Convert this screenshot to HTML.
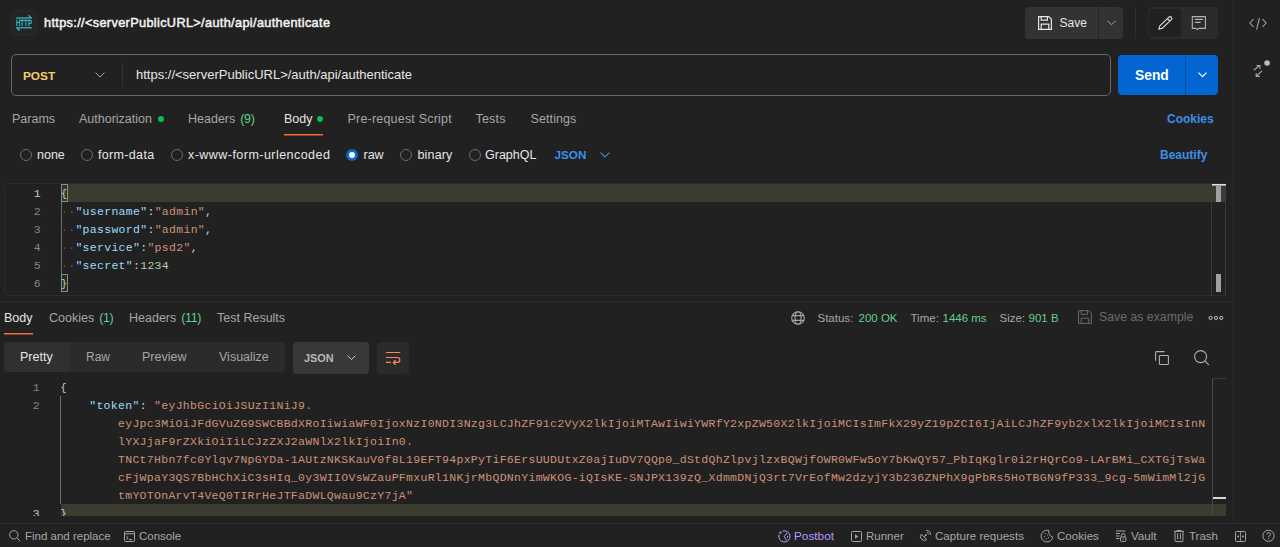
<!DOCTYPE html>
<html><head><meta charset="utf-8">
<style>
*{margin:0;padding:0;box-sizing:border-box}
html,body{width:1280px;height:547px;overflow:hidden;background:#212121;font-family:"Liberation Sans",sans-serif;color:#e6e6e6}
.a{position:absolute;white-space:pre}
.t{font-size:12.5px;line-height:15px}
.g{color:#a6a6a6}
.w{color:#e6e6e6}
.cnt{color:#62cf8e}
span.cnt{margin-left:1.5px;letter-spacing:-0.35px}
.dot{position:absolute;width:6px;height:6px;border-radius:50%;background:#0cbb52}
.radio{position:absolute;width:12px;height:12px;border-radius:50%;border:1px solid #6b6b6b}
.mono{font-family:"Liberation Mono",monospace;font-size:11.5px;letter-spacing:0.3px;line-height:18px}
.ln{position:absolute;width:20px;text-align:right;color:#858585}
.k{color:#9cdcfe}
.s{color:#ce9178}
.n{color:#b5cea8}
.p{color:#d4d4d4}
.ws{color:#5c5c5c}
svg{position:absolute;overflow:visible}
</style></head><body>

<!-- top bar -->
<div class="a" style="left:11px;top:10px;width:26px;height:26px;border-radius:5px;background:#242424;border:1px solid #292929"></div>
<svg style="left:10px;top:9px" width="28" height="28" viewBox="0 0 28 28">
  <path d="M6.2 9H22M18.4 6.3L21.6 9.2" stroke="#2ea3ae" stroke-width="1.5" fill="none"/>
  <path d="M6.2 18.8H22M6.5 18.6L9.7 21.6" stroke="#2ea3ae" stroke-width="1.5" fill="none"/>
  <text x="5.9" y="17.2" font-family="Liberation Sans" font-size="8.7" fill="#3ccbd9" stroke="#3ccbd9" stroke-width="0.3" textLength="16.1" lengthAdjust="spacingAndGlyphs">HTTP</text>
</svg>
<div class="a" style="left:44px;top:16px;font-size:12.7px;letter-spacing:0.36px;line-height:15px;-webkit-text-stroke:0.5px #f2f2f2;color:#f2f2f2">https://&lt;serverPublicURL&gt;/auth/api/authenticate</div>

<div class="a" style="left:1025px;top:7px;width:98px;height:32px;border-radius:4px;background:#333333"></div>
<div class="a" style="left:1098px;top:7px;width:1px;height:32px;background:#242424"></div>
<svg style="left:1038px;top:16px" width="14" height="14" viewBox="0 0 14 14">
  <path d="M0.6 0.6H10.8L13.4 3.2V13.4H0.6Z" stroke="#e6e6e6" stroke-width="1.2" fill="none"/>
  <path d="M3.2 0.6V4.2H9.4V0.6" stroke="#e6e6e6" stroke-width="1.2" fill="none"/>
  <path d="M3.2 13.4V8.2H10.8V13.4" stroke="#e6e6e6" stroke-width="1.2" fill="none"/>
</svg>
<div class="a t w" style="left:1059.5px;top:16px;font-size:12px">Save</div>
<svg style="left:1107px;top:20px" width="9" height="6" viewBox="0 0 9 6"><path d="M0.5 0.8L4.5 4.8L8.5 0.8" stroke="#a6a6a6" stroke-width="1" fill="none"/></svg>
<div class="a" style="left:1135px;top:7px;width:1px;height:32px;background:#2e2e2e"></div>
<div class="a" style="left:1148px;top:7px;width:70px;height:32px;border-radius:4px;background:#2b2b2b"></div>
<div class="a" style="left:1149px;top:9px;width:32px;height:28px;border-radius:3px;background:#212121"></div>
<svg style="left:1158px;top:16px" width="14" height="14" viewBox="0 0 14 14">
  <path d="M0.8 13.2L1.83 9.87L11.03 1.17A1.7 1.7 0 0 1 13.37 3.63L4.17 12.33Z M9.58 2.55L11.92 5.01" stroke="#e6e6e6" stroke-width="1.1" fill="none" stroke-linejoin="round"/>
</svg>
<svg style="left:1191px;top:15px" width="16" height="16" viewBox="0 0 16 16">
  <path d="M1.3 1.6H14.4V13.4H7.6L6.3 14.6L5 13.4H1.3Z" stroke="#b3b3b3" stroke-width="1.1" fill="none" stroke-linejoin="round"/>
  <path d="M3.8 4.4H12M3.8 7.4H9.7" stroke="#b3b3b3" stroke-width="1.1" fill="none"/>
</svg>

<!-- right sidebar -->
<div class="a" style="left:1233px;top:0;width:1px;height:523px;background:#2c2c2c"></div>
<svg style="left:1248px;top:17px" width="20" height="14" viewBox="0 0 20 14">
  <path d="M5.5 2L1.9 6L5.5 10M14.5 2L18.1 6L14.5 10M11.4 1.2L8.6 12.6" stroke="#a6a6a6" stroke-width="1.1" fill="none"/>
</svg>
<svg style="left:1250px;top:58px" width="22" height="22" viewBox="0 0 22 22">
  <path d="M3.7 12.3L9.9 7.3M6.4 7.5H9.9V10.9" stroke="#a6a6a6" stroke-width="1.1" fill="none"/>
  <path d="M11.9 13L6.2 18.4M9.9 18.4H6.2V14.9" stroke="#a6a6a6" stroke-width="1.1" fill="none"/>
  <circle cx="17.1" cy="5" r="2.8" fill="#b8bcc4"/>
</svg>

<!-- url bar -->
<div class="a" style="left:11px;top:54px;width:1100px;height:42px;border:1px solid #686868;border-radius:5px"></div>
<div class="a" style="left:23px;top:69px;font-size:11.8px;line-height:15px;font-weight:bold;color:#f5cf6a">POST</div>
<svg style="left:95px;top:72px" width="10" height="6" viewBox="0 0 10 6"><path d="M0.6 0.6L5 5L9.4 0.6" stroke="#a6a6a6" stroke-width="1" fill="none"/></svg>
<div class="a" style="left:122px;top:63px;width:1px;height:24px;background:#333"></div>
<div class="a" style="left:136px;top:67px;font-size:13px;line-height:15px;color:#e6e6e6">https://&lt;serverPublicURL&gt;/auth/api/authenticate</div>

<div class="a" style="left:1118px;top:55px;width:100px;height:40px;border-radius:4px;background:#0265d2"></div>
<div class="a" style="left:1185px;top:55px;width:1px;height:40px;background:#0a4e9a"></div>
<div class="a" style="left:1135px;top:68px;font-size:13.8px;line-height:16px;font-weight:bold;color:#fff">Send</div>
<svg style="left:1198px;top:72px" width="9" height="6" viewBox="0 0 9 6"><path d="M0.5 0.6L4.5 4.6L8.5 0.6" stroke="#fff" stroke-width="1.2" fill="none"/></svg>

<!-- request tabs -->
<div class="a t g" style="left:12px;top:112px">Params</div>
<div class="a t g" style="left:79px;top:112px">Authorization</div>
<div class="dot" style="left:158px;top:116px"></div>
<div class="a t g" style="left:188px;top:112px">Headers <span class="cnt">(9)</span></div>
<div class="a t w" style="left:284px;top:112px">Body</div>
<div class="dot" style="left:317px;top:116px"></div>
<div class="a" style="left:284px;top:134px;width:39px;height:2px;background:linear-gradient(#ff6c37 50%,rgba(255,108,55,.45) 50%)"></div>
<div class="a t g" style="left:347.5px;top:112px;letter-spacing:0.2px">Pre-request Script</div>
<div class="a t g" style="left:475.5px;top:112px;letter-spacing:0.2px">Tests</div>
<div class="a t g" style="left:530.5px;top:112px;letter-spacing:0.1px">Settings</div>
<div class="a" style="left:1167px;top:112px;font-size:12px;line-height:15px;font-weight:bold;color:#3d8fe8">Cookies</div>

<!-- body type radios -->
<div class="radio" style="left:20px;top:149px"></div>
<div class="a t w" style="left:37px;top:148px">none</div>
<div class="radio" style="left:81px;top:149px"></div>
<div class="a t w" style="left:98px;top:148px;letter-spacing:0.33px">form-data</div>
<div class="radio" style="left:171px;top:149px"></div>
<div class="a t w" style="left:188px;top:148px;letter-spacing:0.46px">x-www-form-urlencoded</div>
<div class="a" style="left:346px;top:149px;width:12px;height:12px;border-radius:50%;background:#0265d2"></div>
<div class="a" style="left:349px;top:152px;width:6px;height:6px;border-radius:50%;background:#fff"></div>
<div class="a t w" style="left:363.5px;top:148px">raw</div>
<div class="radio" style="left:400px;top:149px"></div>
<div class="a t w" style="left:417.5px;top:148px;letter-spacing:0.15px">binary</div>
<div class="radio" style="left:469px;top:149px"></div>
<div class="a t w" style="left:485px;top:148px">GraphQL</div>
<div class="a" style="left:554.5px;top:147px;font-size:11.7px;line-height:15px;font-weight:bold;color:#3d8fe8">JSON</div>
<svg style="left:600px;top:152px" width="10" height="6" viewBox="0 0 10 6"><path d="M0.6 0.6L5 5L9.4 0.6" stroke="#3d8fe8" stroke-width="1.1" fill="none"/></svg>
<div class="a" style="left:1160px;top:148px;font-size:12px;line-height:15px;font-weight:bold;color:#3d8fe8">Beautify</div>

<!-- request editor -->
<div class="a" style="left:6px;top:183px;width:1220px;height:1px;background:#2c2c2c"></div><div class="a" style="left:4px;top:185px;width:1px;height:109px;background:#2c2c2c"></div><div class="a" style="left:6px;top:295px;width:1220px;height:1px;background:#2c2c2c"></div>
<div class="a" style="left:62px;top:184px;width:1163px;height:18px;background:#3c3b2f"></div>
<div class="a" style="left:61px;top:184px;width:7px;height:18px;border:1px solid #8a8a8a;background:#2a3a24"></div>
<div class="a" style="left:61px;top:274px;width:7px;height:18px;border:1px solid #8a8a8a;background:#23301f"></div>
<div class="a" style="left:61px;top:202px;width:1px;height:72px;background:#6e6e6e"></div>
<div class="mono">
  <div class="ln" style="left:21px;top:185px;color:#c6c6c6">1</div>
  <div class="ln" style="left:21px;top:203px">2</div>
  <div class="ln" style="left:21px;top:221px">3</div>
  <div class="ln" style="left:21px;top:239px">4</div>
  <div class="ln" style="left:21px;top:257px">5</div>
  <div class="ln" style="left:21px;top:275px">6</div>
  <div class="a p" style="left:61px;top:186px;font-size:10px">{</div>
  <div class="a" style="left:61px;top:203px"><span class="ws">··</span><span class="k">"username"</span><span class="p">:</span><span class="s">"admin"</span><span class="p">,</span></div>
  <div class="a" style="left:61px;top:221px"><span class="ws">··</span><span class="k">"password"</span><span class="p">:</span><span class="s">"admin"</span><span class="p">,</span></div>
  <div class="a" style="left:61px;top:239px"><span class="ws">··</span><span class="k">"service"</span><span class="p">:</span><span class="s">"psd2"</span><span class="p">,</span></div>
  <div class="a" style="left:61px;top:257px"><span class="ws">··</span><span class="k">"secret"</span><span class="p">:</span><span class="n">1234</span></div>
  <div class="a p" style="left:61px;top:276px;font-size:10px">}</div>
</div>
<div class="a" style="left:1211px;top:184px;width:1px;height:112px;background:#3a3a3a"></div>
<div class="a" style="left:1225px;top:184px;width:1px;height:112px;background:#3a3a3a"></div>
<div class="a" style="left:1212px;top:184px;width:14px;height:2px;background:linear-gradient(#e0e0e0 50%,#9a9a9a 50%)"></div>
<div class="a" style="left:1216px;top:186px;width:5px;height:16px;background:#a0a0a0"></div>
<div class="a" style="left:1216px;top:274px;width:5px;height:18px;background:#a0a0a0"></div>

<!-- pane divider -->
<div class="a" style="left:0;top:301px;width:1233px;height:1px;background:#2c2c2c"></div>

<!-- response tabs -->
<div class="a t w" style="left:4px;top:311px">Body</div>
<div class="a" style="left:4px;top:333px;width:29px;height:2px;background:linear-gradient(#ff6c37 50%,rgba(255,108,55,.45) 50%)"></div>
<div class="a t g" style="left:49px;top:311px">Cookies <span class="cnt">(1)</span></div>
<div class="a t g" style="left:129px;top:311px">Headers <span class="cnt">(11)</span></div>
<div class="a t g" style="left:217px;top:311px">Test Results</div>

<svg style="left:791px;top:311px" width="14" height="14" viewBox="0 0 14 14">
  <circle cx="7" cy="7" r="6.3" stroke="#a6a6a6" stroke-width="1.1" fill="none"/>
  <ellipse cx="7" cy="7" rx="3" ry="6.3" stroke="#a6a6a6" stroke-width="1.1" fill="none"/>
  <path d="M0.8 4.6H13.2M0.8 9.4H13.2" stroke="#a6a6a6" stroke-width="1.1"/>
</svg>
<div class="a g" style="left:817.5px;top:311px;font-size:11.5px;line-height:14px">Status:</div>
<div class="a cnt" style="left:858.5px;top:311px;font-size:11.5px;line-height:14px">200 OK</div>
<div class="a g" style="left:910.5px;top:311px;font-size:11.5px;line-height:14px">Time:</div>
<div class="a cnt" style="left:942.5px;top:311px;font-size:11.5px;line-height:14px">1446 ms</div>
<div class="a g" style="left:999.5px;top:311px;font-size:11.5px;line-height:14px">Size:</div>
<div class="a cnt" style="left:1028.5px;top:311px;font-size:11.5px;line-height:14px">901 B</div>
<svg style="left:1078px;top:310px" width="14" height="14" viewBox="0 0 14 14">
  <path d="M0.6 0.6H10.8L13.4 3.2V13.4H0.6Z" stroke="#6b6b6b" stroke-width="1" fill="none"/>
  <path d="M3.2 0.6V4.4H9.6V0.6" stroke="#6b6b6b" stroke-width="1" fill="none"/>
  <path d="M3.2 13.4V8.2H10.8V13.4" stroke="#6b6b6b" stroke-width="1" fill="none"/>
</svg>
<div class="a" style="left:1099px;top:310px;font-size:12.3px;line-height:15px;color:#6b6b6b">Save as example</div>
<svg style="left:1208px;top:315px" width="16" height="6" viewBox="0 0 16 6">
  <circle cx="2.6" cy="2.9" r="1.6" stroke="#c4c4c4" stroke-width="1" fill="none"/>
  <circle cx="7.9" cy="2.9" r="1.6" stroke="#c4c4c4" stroke-width="1" fill="none"/>
  <circle cx="13.2" cy="2.9" r="1.6" stroke="#c4c4c4" stroke-width="1" fill="none"/>
</svg>

<!-- response toolbar -->
<div class="a" style="left:4px;top:342px;width:281px;height:30px;border-radius:4px;background:#2b2b2b"></div>
<div class="a" style="left:4px;top:342px;width:66px;height:30px;border-radius:4px 0 0 4px;background:#303030"></div>
<div class="a t w" style="left:20px;top:350px">Pretty</div>
<div class="a t g" style="left:86px;top:350px;font-size:12px">Raw</div>
<div class="a t g" style="left:142px;top:350px">Preview</div>
<div class="a t g" style="left:219px;top:350px">Visualize</div>
<div class="a" style="left:293px;top:342px;width:76px;height:32px;border-radius:4px;background:#383838"></div>
<div class="a" style="left:304px;top:351px;font-size:10.9px;line-height:14px;font-weight:bold;color:#b8b8b8">JSON</div>
<svg style="left:347px;top:355px" width="9" height="6" viewBox="0 0 9 6"><path d="M0.5 0.6L4.5 4.6L8.5 0.6" stroke="#c8c8c8" stroke-width="1" fill="none"/></svg>
<div class="a" style="left:377px;top:342px;width:32px;height:32px;border-radius:4px;background:#2b2b2b"></div>
<svg style="left:385px;top:351px" width="16" height="14" viewBox="0 0 16 14">
  <path d="M0.9 1.5H15.2M0.9 6.5H12.5A2.48 2.48 0 0 1 12.5 11.45H8.4M10.6 9.2L8.3 11.45L10.6 13.7M0.9 11.45H6" stroke="#f5875a" stroke-width="1.2" fill="none" stroke-linejoin="round"/>
</svg>
<svg style="left:1155px;top:351px" width="14" height="14" viewBox="0 0 14 14">
  <path d="M9.6 0.6H1.3Q0.6 0.6 0.6 1.3V9.8" stroke="#b0b0b0" stroke-width="1.1" fill="none"/>
  <rect x="4.4" y="4.5" width="9" height="9" rx="0.8" stroke="#b0b0b0" stroke-width="1.1" fill="none"/>
</svg>
<svg style="left:1194px;top:350px" width="16" height="16" viewBox="0 0 16 16">
  <circle cx="6.6" cy="6.6" r="6" stroke="#b0b0b0" stroke-width="1.1" fill="none"/>
  <path d="M10.9 10.9L14.8 14.8" stroke="#b0b0b0" stroke-width="1.1"/>
</svg>

<!-- response editor -->
<div class="a" style="left:0;top:378px;width:1233px;height:138px;overflow:hidden">
<div class="a" style="left:61px;top:126px;width:1165px;height:18px;background:#3c3b2f"></div>
<div class="a" style="left:60px;top:18px;width:1px;height:108px;background:#6e6e6e"></div>
<div class="mono">
  <div class="ln" style="left:20px;top:1px">1</div>
  <div class="ln" style="left:20px;top:19px">2</div>
  <div class="ln" style="left:20px;top:127px;color:#c6c6c6">3</div>
  <div class="a p" style="left:60.5px;top:2px;font-size:10px">{</div>
  <div class="a" style="left:60.4px;top:19px">    <span class="k">"token"</span><span class="p">: </span><span class="s">"eyJhbGciOiJSUzI1NiJ9.</span></div>
  <div class="a s" style="left:118px;top:37px">eyJpc3MiOiJFdGVuZG9SWCBBdXRoIiwiaWF0IjoxNzI0NDI3Nzg3LCJhZF91c2VyX2lkIjoiMTAwIiwiYWRfY2xpZW50X2lkIjoiMCIsImFkX29yZ19pZCI6IjAiLCJhZF9yb2xlX2lkIjoiMCIsInN</div>
  <div class="a s" style="left:118px;top:55px">lYXJjaF9rZXkiOiIiLCJzZXJ2aWNlX2lkIjoiIn0.</div>
  <div class="a s" style="left:118px;top:73px">TNCt7Hbn7fc0Ylqv7NpGYDa-1AUtzNKSKauV0f8L19EFT94pxPyTiF6ErsUUDUtxZ0ajIuDV7QQp0_dStdQhZlpvjlzxBQWjfOWR0WFw5oY7bKwQY57_PbIqKglr0i2rHQrCo9-LArBMi_CXTGjTsWa</div>
  <div class="a s" style="left:118px;top:91px">cFjWpaY3QS7BbHChXiC3sHIq_0y3WIIOVsWZauPFmxuRl1NKjrMbQDNnYimWKOG-iQIsKE-SNJPX139zQ_XdmmDNjQ3rt7VrEofMw2dzyjY3b236ZNPhX9gPbRs5HoTBGN9fP333_9cg-5mWimMl2jG</div>
  <div class="a s" style="left:118px;top:109px">tmYOTOnArvT4VeQ0TIRrHeJTFaDWLQwau9CzY7jA"</div>
  <div class="a p" style="left:60.5px;top:128px;font-size:10px">}</div>
</div>
<div class="a" style="left:1212px;top:0;width:1px;height:145px;background:#4a4a4a"></div>
<div class="a" style="left:1212px;top:0;width:14px;height:1px;background:#3a3a3a"></div>
<div class="a" style="left:1213px;top:119px;width:13px;height:2px;background:#d8d8d8"></div>
</div>

<!-- status bar -->
<div class="a" style="left:0;top:523px;width:1280px;height:1px;background:#2c2c2c"></div>
<svg style="left:9px;top:530px" width="12" height="12" viewBox="0 0 12 12">
  <circle cx="4.8" cy="4.8" r="4.2" stroke="#a6a6a6" stroke-width="1" fill="none"/>
  <path d="M7.9 7.9L11.2 11.2" stroke="#a6a6a6" stroke-width="1"/>
</svg>
<div class="a g" style="left:25px;top:529px;font-size:11.5px;line-height:14px">Find and replace</div>
<svg style="left:123.5px;top:530.5px" width="11" height="11" viewBox="0 0 11 11">
  <rect x="0.5" y="0.5" width="10" height="10" rx="1" stroke="#a6a6a6" stroke-width="1" fill="none"/>
  <path d="M0.5 2.8H10.5M2.4 5.2L4.2 6.8L2.4 8.4M5 8.6H8" stroke="#a6a6a6" stroke-width="1" fill="none"/>
</svg>
<div class="a g" style="left:139px;top:529px;font-size:11.5px;line-height:14px">Console</div>

<svg style="left:777px;top:529px" width="15" height="15" viewBox="0 0 15 15">
  <path d="M5.49 2.14A5.6 5.6 0 1 1 2.14 5.49M10.2 3.6L7.1 7.8L9.9 11.6M10.5 6.9V8.7" stroke="#b89af5" stroke-width="1" fill="none"/>
  <path d="M3.4 2L3.9 3.3L5.2 3.8L3.9 4.3L3.4 5.6L2.9 4.3L1.6 3.8L2.9 3.3Z" fill="#b89af5"/>
</svg>
<div class="a" style="left:794px;top:529px;font-size:11.8px;line-height:14px;color:#b89af5">Postbot</div>
<svg style="left:850.5px;top:530.5px" width="11" height="11" viewBox="0 0 11 11">
  <rect x="0.5" y="0.5" width="10" height="10" rx="1" stroke="#a6a6a6" stroke-width="1" fill="none"/>
  <path d="M4 3.2L7.3 5.5L4 7.8Z" fill="#a6a6a6"/>
</svg>
<div class="a g" style="left:866px;top:529px;font-size:11.5px;line-height:14px">Runner</div>
<svg style="left:915px;top:526px" width="22" height="19" viewBox="0 0 22 19">
  <path d="M6.25 8.16A3.9 3.9 0 0 0 11.8 13.54Z" stroke="#a6a6a6" stroke-width="1" fill="none" stroke-linejoin="round"/>
  <path d="M9 10.8L10.8 9.1" stroke="#a6a6a6" stroke-width="1"/>
  <circle cx="10.9" cy="9" r="0.9" fill="#a6a6a6"/>
  <path d="M11.2 4.4A4.6 4.6 0 0 1 15.6 8.8M11.9 6.5A2.5 2.5 0 0 1 13.8 8.4" stroke="#a6a6a6" stroke-width="1" fill="none"/>
</svg>
<div class="a g" style="left:935px;top:529px;font-size:11.6px;line-height:14px">Capture requests</div>
<svg style="left:1036px;top:526px" width="24" height="20" viewBox="0 0 24 20">
  <path d="M13.02 4.56A5.9 5.9 0 1 0 16.81 11.12A5.2 5.2 0 0 1 13.02 4.56Z" stroke="#a6a6a6" stroke-width="1" fill="none" stroke-linejoin="round"/>
  <circle cx="9.2" cy="7.6" r="0.6" fill="#a6a6a6"/><circle cx="11.6" cy="9" r="0.6" fill="#a6a6a6"/><circle cx="8.4" cy="10.6" r="0.6" fill="#a6a6a6"/>
  <circle cx="12.4" cy="11.6" r="0.6" fill="#a6a6a6"/><circle cx="10.2" cy="12.9" r="0.6" fill="#a6a6a6"/>
</svg>
<div class="a g" style="left:1057px;top:529px;font-size:11.6px;line-height:14px">Cookies</div>
<svg style="left:1110px;top:526px" width="20" height="20" viewBox="0 0 20 20">
  <path d="M6 5H15.3M6 7.5H10M6 10H9.5M6 12.5H9.5" stroke="#a6a6a6" stroke-width="1" fill="none"/>
  <rect x="10.5" y="11" width="5.4" height="4.4" rx="0.7" stroke="#a6a6a6" stroke-width="1" fill="none"/>
  <path d="M11.4 11V9.3A1.8 1.8 0 0 1 15 9.3V11" stroke="#a6a6a6" stroke-width="1" fill="none"/>
  <circle cx="13.2" cy="13.2" r="0.6" fill="#a6a6a6"/>
</svg>
<div class="a g" style="left:1131px;top:529px;font-size:11.6px;line-height:14px">Vault</div>
<svg style="left:1170px;top:526px" width="20" height="20" viewBox="0 0 20 20">
  <path d="M4 5.4H14M6.8 5.4V4.5H11.2V5.4M5 5.6V14.6Q5 15.6 6 15.6H12Q13 15.6 13 14.6V5.6M7.6 7.2V13.4M10.4 7.2V13.4" stroke="#a6a6a6" stroke-width="1" fill="none"/>
</svg>
<div class="a g" style="left:1189px;top:529px;font-size:11.5px;line-height:14px">Trash</div>
<svg style="left:1234.5px;top:530.5px" width="11" height="11" viewBox="0 0 11 11">
  <rect x="0.5" y="0.5" width="10" height="10" rx="1" stroke="#a6a6a6" stroke-width="1" fill="none"/>
  <path d="M5.5 0.5V10.5" stroke="#a6a6a6" stroke-width="0.8" fill="none"/><rect x="2.3" y="4.6" width="1.7" height="1.7" fill="#b0b0b0"/><rect x="7" y="4.6" width="1.7" height="1.7" fill="#b0b0b0"/>
</svg>
<svg style="left:1262px;top:529px" width="13" height="13" viewBox="0 0 13 13">
  <circle cx="6.5" cy="6.8" r="5.6" stroke="#a6a6a6" stroke-width="1" fill="none"/>
  <path d="M4.8 5.4A1.8 1.8 0 1 1 6.5 7.2V8" stroke="#a6a6a6" stroke-width="1" fill="none"/>
  <circle cx="6.5" cy="9.7" r="0.6" fill="#a6a6a6"/>
</svg>

</body></html>
